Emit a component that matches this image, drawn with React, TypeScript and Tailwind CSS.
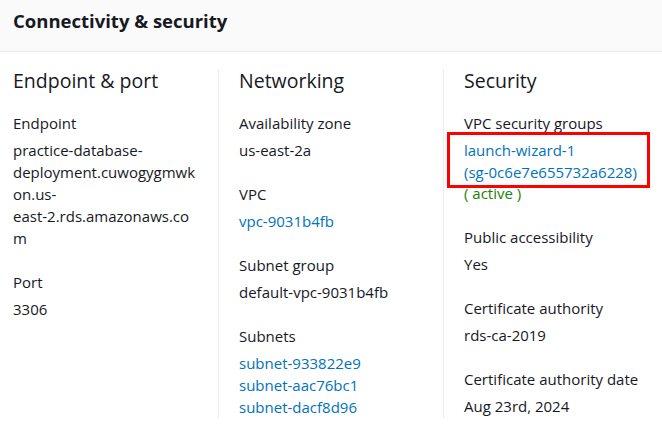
import React from 'react';

interface Field {
  label: string;
  lines: { text: string; kind?: 'link' | 'ok' }[];
  boxed?: number;
}

interface Column {
  title: string;
  fields: Field[];
}

const columns: Column[] = [
  {
    title: 'Endpoint & port',
    fields: [
      {
        label: 'Endpoint',
        lines: [
          { text: 'practice-database-' },
          { text: 'deployment.cuwogygmwk' },
          { text: 'on.us-' },
          { text: 'east-2.rds.amazonaws.co' },
          { text: 'm' },
        ],
      },
      { label: 'Port', lines: [{ text: '3306' }] },
    ],
  },
  {
    title: 'Networking',
    fields: [
      { label: 'Availability zone', lines: [{ text: 'us-east-2a' }] },
      { label: 'VPC', lines: [{ text: 'vpc-9031b4fb', kind: 'link' }] },
      { label: 'Subnet group', lines: [{ text: 'default-vpc-9031b4fb' }] },
      {
        label: 'Subnets',
        lines: [
          { text: 'subnet-933822e9', kind: 'link' },
          { text: 'subnet-aac76bc1', kind: 'link' },
          { text: 'subnet-dacf8d96', kind: 'link' },
        ],
      },
    ],
  },
  {
    title: 'Security',
    fields: [
      {
        label: 'VPC security groups',
        boxed: 2,
        lines: [
          { text: 'launch-wizard-1', kind: 'link' },
          { text: '(sg-0c6e7e655732a6228)', kind: 'link' },
          { text: '( active )', kind: 'ok' },
        ],
      },
      { label: 'Public accessibility', lines: [{ text: 'Yes' }] },
      { label: 'Certificate authority', lines: [{ text: 'rds-ca-2019' }] },
      { label: 'Certificate authority date', lines: [{ text: 'Aug 23rd, 2024' }] },
    ],
  },
];

const color = (kind?: string) =>
  kind === 'link' ? 'text-[#0073bb]' : kind === 'ok' ? 'text-[#1d8102]' : 'text-[#16191f]';

const FieldBlock = ({ field }: { field: Field }) => {
  const n = field.boxed ?? 0;
  const boxed = field.lines.slice(0, n);
  const rest = field.lines.slice(n);

  return (
    <div className="mb-[22px] last:mb-0">
      <div className="mb-[5px]">{field.label}</div>
      {n > 0 && (
        <div className="relative">
          {/* red highlight drawn over the security group link */}
          <div className="pointer-events-none absolute -left-[17px] -top-[7px] h-[56px] w-[203px] border-[3px] border-[#ff0000]" />
          {boxed.map((l) => (
            <div key={l.text} className={color(l.kind)}>
              {l.text}
            </div>
          ))}
        </div>
      )}
      {rest.map((l) => (
        <div key={l.text} className={`whitespace-nowrap ${color(l.kind)} ${l.kind === 'ok' ? 'leading-[21px]' : ''}`}>
          {l.text}
        </div>
      ))}
    </div>
  );
};

export default function App() {
  return (
    <div
      className="min-h-screen bg-white text-[15px] leading-[22px] text-[#16191f]"
      style={{ fontFamily: '"Open Sans", "Noto Sans", sans-serif' }}
    >
      <div className="h-[52px] border-b border-[#eaeded] bg-[#fafafa] px-[13px] pt-[8px]">
        <h2 className="text-[18.5px] font-bold leading-[26px]">Connectivity &amp; security</h2>
      </div>

      <div className="grid grid-cols-[205px_225px_1fr] pl-[13px] pt-[17px]">
        {columns.map((col, i) => (
          <div
            key={col.title}
            className={i === 0 ? 'pr-[20px]' : 'border-l border-[#eaeded] pl-[20px] pr-[10px]'}
          >
            <h3 className="mb-[19px] text-[19.5px] leading-[24px]">{col.title}</h3>
            {col.fields.map((f) => (
              <FieldBlock key={f.label} field={f} />
            ))}
          </div>
        ))}
      </div>
    </div>
  );
}
